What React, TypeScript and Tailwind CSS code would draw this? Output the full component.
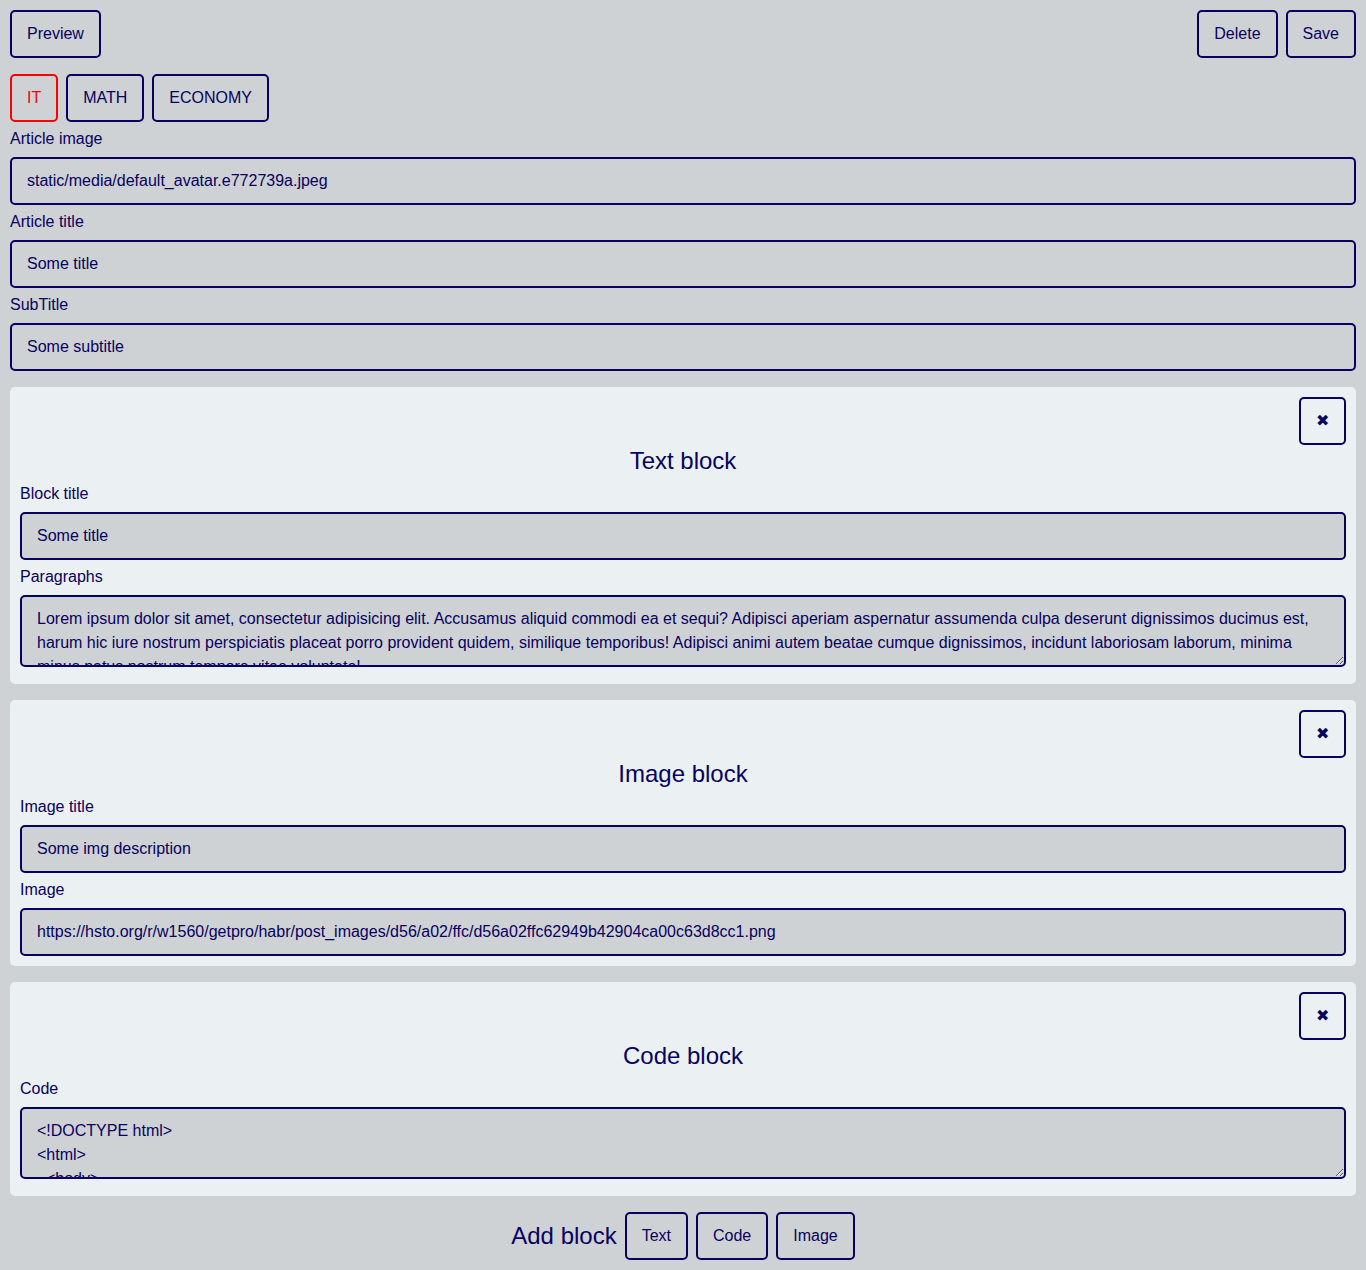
import { useId, useState } from "react";
import type { ReactNode } from "react";

const control =
  "rounded-[5px] border-2 border-[#090060] text-[#090060] px-[15px] py-2.5 text-base leading-6";

function Button({ children, active, onClick, label }: { children: ReactNode; active?: boolean; onClick?: () => void; label?: string }) {
  return (
    <button
      type="button"
      aria-label={label}
      onClick={onClick}
      className={
        active
          ? "rounded-[5px] border-2 border-[#ff0000] px-[15px] py-2.5 text-base leading-6 text-[#ff0000]"
          : control
      }
    >
      {children}
    </button>
  );
}

function Field({ label, value, multiline }: { label: string; value: string; multiline?: boolean }) {
  const id = useId();
  return (
    <div className="flex flex-col">
      <label htmlFor={id} className="pt-[5px] pb-1.5 leading-6">
        {label}
      </label>
      {multiline ? (
        <textarea
          id={id}
          defaultValue={value}
          className={`${control} mb-[7px] h-[72px] w-full resize overflow-hidden bg-[#ced2d5] outline-none`}
        />
      ) : (
        <input id={id} type="text" defaultValue={value} className={`${control} w-full bg-[#ced2d5] outline-none`} />
      )}
    </div>
  );
}

function Block({ title, children }: { title: string; children: ReactNode }) {
  return (
    <section className="mt-4 flex flex-col rounded-[5px] bg-[#ebf0f3] p-2.5">
      <div className="flex justify-end">
        <Button label="Remove block">✖</Button>
      </div>
      <h2 className="text-center text-2xl leading-8">{title}</h2>
      {children}
    </section>
  );
}

const paragraph =
  "Lorem ipsum dolor sit amet, consectetur adipisicing elit. Accusamus aliquid commodi ea et sequi? Adipisci aperiam aspernatur assumenda culpa deserunt dignissimos ducimus est, harum hic iure nostrum perspiciatis placeat porro provident quidem, similique temporibus! Adipisci animi autem beatae cumque dignissimos, incidunt laboriosam laborum, minima minus natus nostrum tempore vitae voluptate!";

const code = "<!DOCTYPE html>\n<html>\n  <body>\n  </body>\n</html>";

export default function App() {
  const [topic, setTopic] = useState("IT");
  return (
    <main className="min-h-screen bg-[#ced2d5] p-2.5 font-['Liberation_Sans',Arial,sans-serif] text-base text-[#090060]">
      <header className="flex justify-between">
        <Button>Preview</Button>
        <div className="flex gap-2">
          <Button>Delete</Button>
          <Button>Save</Button>
        </div>
      </header>
      <div className="mt-4 flex gap-2">
        {["IT", "MATH", "ECONOMY"].map((name) => (
          <Button key={name} active={name === topic} onClick={() => setTopic(name)}>
            {name}
          </Button>
        ))}
      </div>
      <Field label="Article image" value="static/media/default_avatar.e772739a.jpeg" />
      <Field label="Article title" value="Some title" />
      <Field label="SubTitle" value="Some subtitle" />
      <Block title="Text block">
        <Field label="Block title" value="Some title" />
        <Field label="Paragraphs" value={paragraph} multiline />
      </Block>
      <Block title="Image block">
        <Field label="Image title" value="Some img description" />
        <Field
          label="Image"
          value="https://hsto.org/r/w1560/getpro/habr/post_images/d56/a02/ffc/d56a02ffc62949b42904ca00c63d8cc1.png"
        />
      </Block>
      <Block title="Code block">
        <Field label="Code" value={code} multiline />
      </Block>
      <footer className="mt-4 flex items-center justify-center gap-2">
        <h2 className="text-2xl leading-8">Add block</h2>
        <Button>Text</Button>
        <Button>Code</Button>
        <Button>Image</Button>
      </footer>
    </main>
  );
}
